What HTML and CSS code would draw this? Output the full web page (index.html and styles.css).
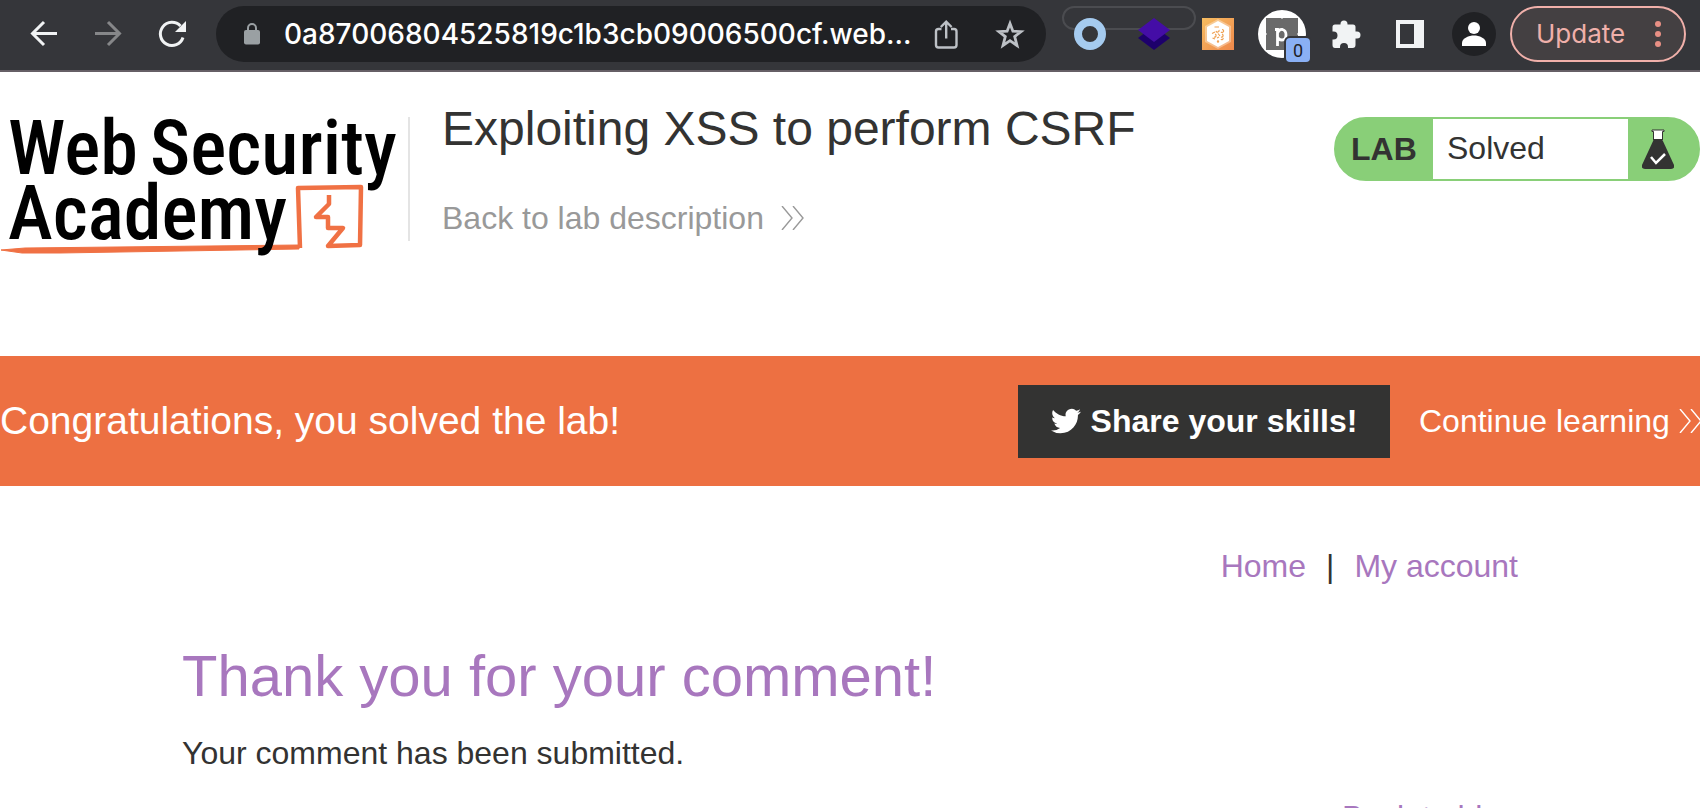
FILE: index.html
```html
<!DOCTYPE html>
<html lang="en">
<head>
<meta charset="utf-8">
<title>Exploiting XSS to perform CSRF</title>
<link rel="stylesheet" href="styles.css">
</head>
<body>
<div class="browser">
  <div class="toolbar">
    <div class="nav-buttons">
      <button class="icon-button" type="button" aria-label="Back">
        <svg viewBox="0 0 32 32" fill="none" stroke="#f1f3f4" stroke-width="3"><path d="M29 15.500H5M16 4L4.500 15.500L16 27"/></svg>
      </button>
      <button class="icon-button" type="button" aria-label="Forward">
        <svg viewBox="0 0 32 32" fill="none" stroke="#868789" stroke-width="3"><path d="M3 15.500H27M16 4L27.500 15.500L16 27"/></svg>
      </button>
      <button class="icon-button" type="button" aria-label="Reload">
        <svg viewBox="0 0 32 32"><path d="M27 19.500A11.600 11.600 0 1 1 24.500 8" fill="none" stroke="#f1f3f4" stroke-width="3"/><path d="M30 3V14H19Z" fill="#f1f3f4"/></svg>
      </button>
    </div>
    <div class="address">
      <svg class="lock" viewBox="0 0 16 22"><path d="M4 9V5a4 4 0 0 1 8 0V9" fill="none" stroke="#9aa0a3" stroke-width="2"/><rect y="7" width="16" height="14.500" rx="2" fill="#9aa0a3"/></svg>
      <input class="url" type="text" aria-label="Address" value="0a87006804525819c1b3cb09006500cf.web...">
      <button class="icon-button" type="button" aria-label="Share">
        <svg viewBox="0 0 32 32" fill="none" stroke="#bdc1c6" stroke-width="2.400"><path d="M11.500 11H8.500Q6 11 6 13.500V27Q6 29.500 8.500 29.500H24Q26.500 29.500 26.500 27V13.500Q26.500 11 24 11H21M16.200 20.500V4M10.800 9L16.200 3.600L21.600 9"/></svg>
      </button>
      <button class="icon-button" type="button" aria-label="Bookmark">
        <svg viewBox="0 0 32 32" fill="none" stroke="#bdc1c6" stroke-width="2.800"><path d="M16 5.500L18.900 13.200L27 13.600L20.700 18.600L23 27.500L16 22.700L9 27.500L11.300 18.600L5 13.600L13.100 13.200Z"/></svg>
      </button>
    </div>
    <div class="extensions">
      <div class="group-outline"></div>
      <button class="icon-button" type="button" aria-label="Ring extension">
        <svg viewBox="0 0 32 32"><circle cx="16" cy="16" r="12" fill="#35363a" stroke="#a5cbef" stroke-width="8"/></svg>
      </button>
      <button class="icon-button" type="button" aria-label="Layers extension">
        <svg viewBox="0 0 32 32"><path d="M16 8L32 20L16 32L0 20Z" fill="#1d006b"/><path d="M16 0L32 12L16 24L0 12Z" fill="#440da6"/></svg>
      </button>
      <button class="icon-button" type="button" aria-label="Hexagon extension">
        <svg viewBox="0 0 32 32"><defs><linearGradient id="amber" x1="0" y1="0" x2="1" y2="1"><stop offset="0" stop-color="#f6bd61"/><stop offset="1" stop-color="#ef884b"/></linearGradient></defs><path d="M0 0H32V32H0Z" fill="url(#amber)"/><path d="M16 1L29 8V24L16 31L3 24V8Z" fill="#fff" opacity=".35"/><path d="M16 3L27 9V23L16 29L5 23V9Z" fill="#fff"/><g fill="none" stroke="#efa052" stroke-width="1.200"><path d="M12.500 9H17M17 12a1.500 1.500 0 1 1-3 1M20 11.500a1.500 1.500 0 1 1-1 2.500M10 15.500L13 14M13 16a1.500 1.500 0 1 1-1 3M16 15.500L18 18M20 16a1.500 1.500 0 1 1-1 3M10.500 20L13 21M15 20l2-1M19 21a1 1 0 1 0 2-1"/><circle cx="16" cy="23.500" r=".6"/></g></svg>
      </button>
      <button class="icon-button" type="button" aria-label="p extension">
        <svg viewBox="0 0 32 32"><circle cx="16" cy="16" r="24" fill="#fff"/><path d="M0 0H15L16 1L17 0H32V15L31 16L32 17V32H0V17L1 16L0 15Z" fill="#6a6a6a"/><path d="M9 11.500H11.500V28M11.500 15Q13 11 16.500 11.500Q20 12.500 20 17Q20 22 16 22Q12.500 22 11.500 19" fill="none" stroke="#fff" stroke-width="2.800"/></svg>
        <span class="badge">0</span>
      </button>
      <button class="icon-button" type="button" aria-label="Extensions">
        <svg viewBox="0 0 32 32"><path d="M5 6.500H10.500V6a3.500 3.500 0 0 1 7 0V6.500H23Q25.500 6.500 25.500 9V13.500H27a3.500 3.500 0 0 1 0 7H25.500V27Q25.500 30 22.500 30H18V29a4 4 0 0 0-8 0V30H5Q2.500 30 2.500 27V21.500H3.500a4 4 0 0 0 0-8H2.500V9Q2.500 6.500 5 6.500Z" fill="#f1f3f4"/></svg>
      </button>
      <button class="icon-button" type="button" aria-label="Side panel">
        <svg viewBox="0 0 32 32"><path fill-rule="evenodd" d="M2 2H30V30H2ZM6 6V26H20V6Z" fill="#f1f3f4"/></svg>
      </button>
      <button class="icon-button" type="button" aria-label="Profile">
        <svg viewBox="0 0 32 32"><circle cx="16" cy="16" r="22" fill="#202124"/><circle cx="16" cy="10" r="6" fill="#fff"/><path d="M4 28V25C4 20 11 17.500 16 17.500S28 20 28 25V28Z" fill="#fff"/></svg>
      </button>
    </div>
    <button class="update" type="button">Update
      <svg class="dots" viewBox="0 0 6 26" fill="#e88f84"><circle cx="3" cy="3" r="3"/><circle cx="3" cy="13" r="3"/><circle cx="3" cy="23" r="3"/></svg>
    </button>
  </div>

  <div class="page">
    <header class="lab-header">
      <svg class="logo" viewBox="0 0 400 144" role="img" aria-label="Web Security Academy">
        <g fill="none" stroke="#f07144" stroke-linejoin="round"><path d="M300 132L298 72L361 71L360 129L328 130L343 112H328V101H316L329 88V79" stroke-width="4.500"/></g>
        <path d="M1 134L25 132L299 129V133L180 135L60 137H22Z" fill="#f07144" stroke="#f07144" stroke-width="1"/>
        <text class="logo-text" x="8" y="58">Web</text>
        <text class="logo-text" x="150" y="58">Security</text>
        <text class="logo-text" x="8" y="123">Academy</text>
      </svg>
      <div class="title">
        <h1 class="lab-title">Exploiting XSS to perform CSRF</h1>
        <a class="back-link" href="#lab">Back to lab description
          <svg class="chevrons" viewBox="0 0 24 24"><path d="M1 0L11 12L1 24M12 0L22 12L12 24"/></svg>
        </a>
      </div>
      <div class="status">
        <span class="status-label">LAB</span>
        <span class="status-value">Solved</span>
        <svg class="flask" viewBox="0 0 32 40"><path d="M12 2H21V12H12Z" fill="#fff"/><path d="M10 1H22V2.500H20.500V11H11.500V2.500H10Z" fill="#fff" stroke="#333332"/><path d="M12 10H20L32 36Q33 40 29 40H3Q-1 40 0 36Z" fill="#333332"/><path d="M9 28L14 34L23 25" fill="none" stroke="#fff" stroke-width="2.500"/></svg>
      </div>
    </header>

    <section class="banner">
      <p class="banner-text">Congratulations, you solved the lab!</p>
      <button class="share" type="button">
        <svg class="bird" viewBox="0 2 24 20"><path fill="#fff" d="M23.950 4.570a10 10 0 0 1-2.820.77 4.960 4.960 0 0 0 2.160-2.720c-.95.55-2 .95-3.130 1.180a4.920 4.920 0 0 0-8.380 4.480C7.690 8.090 4.070 6.130 1.640 3.160a4.820 4.820 0 0 0-.67 2.480c0 1.710.87 3.210 2.190 4.100a4.900 4.900 0 0 1-2.230-.62v.06a4.920 4.920 0 0 0 3.950 4.830 5 5 0 0 1-2.210.08 4.940 4.940 0 0 0 4.600 3.420A9.870 9.870 0 0 1 0 19.540a13.990 13.990 0 0 0 7.550 2.210c9.050 0 14-7.500 14-13.980 0-.21 0-.42-.02-.63a9.940 9.940 0 0 0 2.460-2.550z"/></svg>
        Share your skills!
      </button>
      <a class="continue" href="#learn">Continue learning
        <svg class="chevrons" viewBox="0 0 24 24"><path d="M1 0L11 12L1 24M12 0L22 12L12 24"/></svg>
      </a>
    </section>

    <main class="content">
      <nav class="links">
        <a class="link" href="#home">Home</a><span>|</span><a class="link" href="#account">My account</a>
      </nav>
      <h2 class="thanks">Thank you for your comment!</h2>
      <p class="message">Your comment has been submitted.</p>
      <a class="link blog-link" href="#blog">Back to blog</a>
    </main>
  </div>
</div>
</body>
</html>
```
FILE: styles.css
```css
* {
  box-sizing: border-box;
}

body {
  margin: 0;
  background: #fff;
  color: #333332;
  font-family: "Liberation Sans", Arial, sans-serif;
  font-size: 32px;
  line-height: 40px;
}

h1,
h2,
p {
  margin: 0;
  font-weight: 400;
}

a {
  text-decoration: none;
}

button {
  padding: 0;
  border: 0;
  background: none;
  font: inherit;
}

svg {
  display: block;
  flex: none;
}

.browser {
  display: flex;
  flex-direction: column;
  height: 100vh;
  overflow: hidden;
}

/* Browser toolbar */
.toolbar {
  display: flex;
  flex: none;
  align-items: center;
  padding: 6px 14px 8px 28px;
  border-bottom: 2px solid #665f66;
  background: #35363a;
}

.nav-buttons {
  display: flex;
  gap: 32px;
}

.icon-button {
  position: relative;
  flex: none;
  width: 32px;
  height: 32px;
}

.icon-button svg {
  width: 32px;
  height: 32px;
  overflow: visible;
}

.address {
  display: flex;
  flex: 1;
  align-items: center;
  gap: 32px;
  min-width: 0;
  height: 56px;
  margin: 0 28px;
  padding: 0 20px 0 28px;
  border-radius: 28px;
  background: #202124;
}

.lock {
  width: 16px;
  height: 22px;
}

.url {
  flex: 1;
  min-width: 0;
  margin: 0 -16px 0 -8px;
  padding: 0;
  border: 0;
  outline: 0;
  background: none;
  color: #fff;
  font-family: Inter, sans-serif;
  font-size: 28px;
  font-weight: 500;
}

.extensions {
  position: relative;
  display: flex;
  gap: 32px;
}

.group-outline {
  position: absolute;
  top: -12px;
  left: -12px;
  width: 134px;
  height: 24px;
  border: 2px solid #4b4c50;
  border-radius: 12px;
}

.badge {
  position: absolute;
  right: -12px;
  bottom: -12px;
  width: 24px;
  height: 24px;
  border-radius: 4px;
  background: #8ab0f4;
  box-shadow: 0 0 0 2px #35363a;
  color: #202124;
  font-family: Roboto, sans-serif;
  font-size: 18px;
  line-height: 26px;
  text-align: center;
}

.update {
  display: flex;
  align-items: center;
  justify-content: space-between;
  width: 176px;
  height: 56px;
  margin-left: 20px;
  padding: 0 23px 0 24px;
  border: 2px solid #f0b0aa;
  border-radius: 28px;
  background: #444042;
  color: #f0b0aa;
  font-family: Inter, sans-serif;
  font-size: 26px;
}

.dots {
  width: 6px;
  height: 26px;
}

/* Lab header */
.lab-header {
  display: flex;
  align-items: flex-start;
  height: 284px;
  padding-top: 32px;
}

.logo {
  width: 400px;
  height: 144px;
  margin-top: 12px;
  overflow: visible;
}

.logo-text {
  font-family: "Roboto Condensed", Roboto, sans-serif;
  font-size: 76px;
  font-weight: 500;
}

.title {
  flex: 1;
  height: 124px;
  margin-top: 13px;
  margin-left: 8px;
  padding-left: 32px;
  border-left: 2px solid #e4e4e4;
}

.lab-title {
  margin-top: -16px;
  font-size: 48px;
  line-height: 56px;
}

.back-link {
  display: flex;
  gap: 17px;
  align-items: center;
  margin-top: 41px;
  color: #999;
}

.chevrons {
  width: 24px;
  height: 24px;
  fill: none;
  stroke: currentColor;
  stroke-width: 1.4;
}

.status {
  display: flex;
  align-items: center;
  width: 366px;
  height: 64px;
  margin-top: 13px;
  border: 2px solid #89cf78;
  border-radius: 32px;
  background: #89cf78;
}

.status-label {
  width: 97px;
  padding-left: 15px;
  font-weight: 700;
}

.status-value {
  flex: 1;
  height: 60px;
  padding-left: 14px;
  background: #fff;
  line-height: 58px;
}

.flask {
  width: 32px;
  height: 40px;
  margin: 0 24px 0 14px;
}

/* Solved banner */
.banner {
  display: flex;
  align-items: center;
  height: 130px;
  background: #ed7042;
  color: #fff;
}

.banner-text {
  flex: 1;
  font-size: 39px;
}

.share {
  display: flex;
  align-items: center;
  justify-content: center;
  gap: 10px;
  width: 372px;
  height: 73px;
  background: #333332;
  color: #fff;
  font-weight: 700;
}

.bird {
  width: 30px;
  height: 26px;
}

.continue {
  display: flex;
  align-items: center;
  justify-content: space-between;
  width: 284px;
  margin-left: 29px;
  margin-right: -3px;
  color: #fff;
  white-space: nowrap;
}

/* Page content */
.content {
  display: flex;
  flex-direction: column;
  max-width: 1336px;
  margin: 0 auto;
  padding-top: 60px;
}

.links {
  display: flex;
  justify-content: flex-end;
  gap: 20px;
}

.link {
  color: #a877be;
}

.thanks {
  margin-top: 56px;
  color: #a877be;
  font-size: 58px;
  line-height: 68px;
}

.message {
  margin-top: 23px;
}

.blog-link {
  align-self: flex-end;
  margin-top: 24px;
}
```
